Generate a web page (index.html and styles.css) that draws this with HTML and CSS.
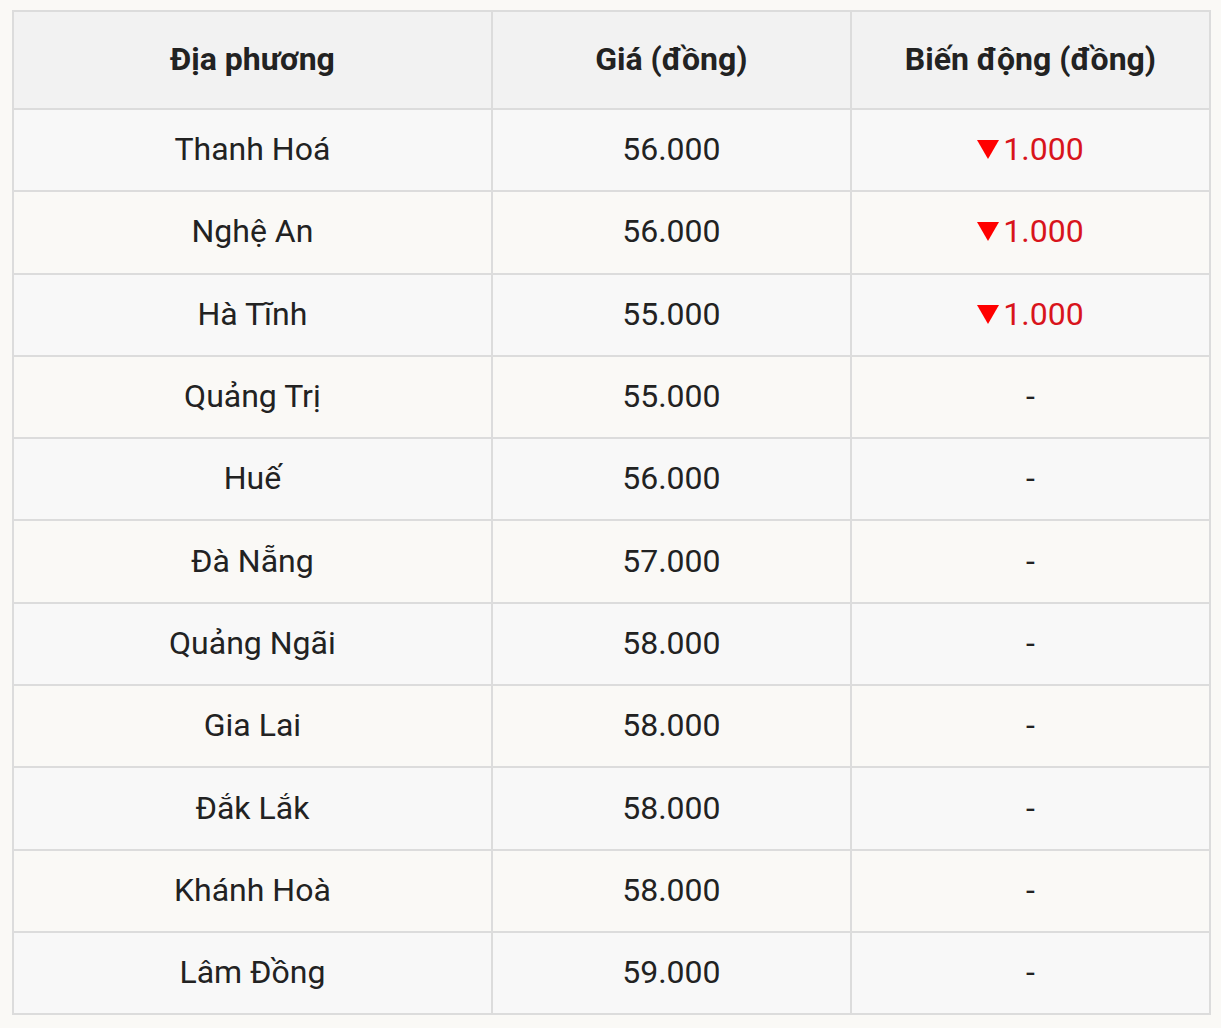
FILE: index.html
```html
<!DOCTYPE html>
<html lang="vi">
<head>
<meta charset="utf-8">
<link rel="stylesheet" href="styles.css">
</head>
<body>
<table class="price-table">
  <colgroup>
    <col class="c1"><col class="c2"><col class="c3">
  </colgroup>
  <thead>
    <tr><th>Địa phương</th><th>Giá (đồng)</th><th>Biến động (đồng)</th></tr>
  </thead>
  <tbody>
    <tr><td>Thanh Hoá</td><td>56.000</td><td class="down"><span class="tri"></span>1.000</td></tr>
    <tr><td>Nghệ An</td><td>56.000</td><td class="down"><span class="tri"></span>1.000</td></tr>
    <tr><td>Hà Tĩnh</td><td>55.000</td><td class="down"><span class="tri"></span>1.000</td></tr>
    <tr><td>Quảng Trị</td><td>55.000</td><td>-</td></tr>
    <tr><td>Huế</td><td>56.000</td><td>-</td></tr>
    <tr><td>Đà Nẵng</td><td>57.000</td><td>-</td></tr>
    <tr><td>Quảng Ngãi</td><td>58.000</td><td>-</td></tr>
    <tr><td>Gia Lai</td><td>58.000</td><td>-</td></tr>
    <tr><td>Đắk Lắk</td><td>58.000</td><td>-</td></tr>
    <tr><td>Khánh Hoà</td><td>58.000</td><td>-</td></tr>
    <tr><td>Lâm Đồng</td><td>59.000</td><td>-</td></tr>
  </tbody>
</table>
</body>
</html>
```
FILE: styles.css
```css
html, body {
  margin: 0;
  background: #faf9f6;
}
body {
  padding: 10px 10px 0 12px;
  font-family: Roboto, "Liberation Sans", sans-serif;
  color: #222;
}
.price-table {
  width: 1199px;
  border-collapse: collapse;
  table-layout: fixed;
  border: 2px solid #dcdcdc;
}
.c1 { width: 40%; }
.c2 { width: 30%; }
.c3 { width: 30%; }
.price-table th,
.price-table td {
  border: 2px solid #dcdcdc;
  text-align: center;
  vertical-align: middle;
  padding: 0 0 2px 0;
  font-size: 32px;
  line-height: 1;
}
.price-table th {
  height: 94px;
  background: #f2f2f2;
  font-weight: 700;
  color: #222;
}
.price-table td {
  height: 78.3px;
  font-weight: 400;
}
.price-table tbody tr:nth-child(odd) td { background: #f8f8f8; }
.price-table tbody tr:nth-child(even) td { background: #faf9f6; }
.down { color: #d8141c; }
.tri {
  display: inline-block;
  width: 0;
  height: 0;
  border-left: 11px solid transparent;
  border-right: 11px solid transparent;
  border-top: 19px solid #f00;
  margin-right: 4px;
  vertical-align: 1px;
}
```
